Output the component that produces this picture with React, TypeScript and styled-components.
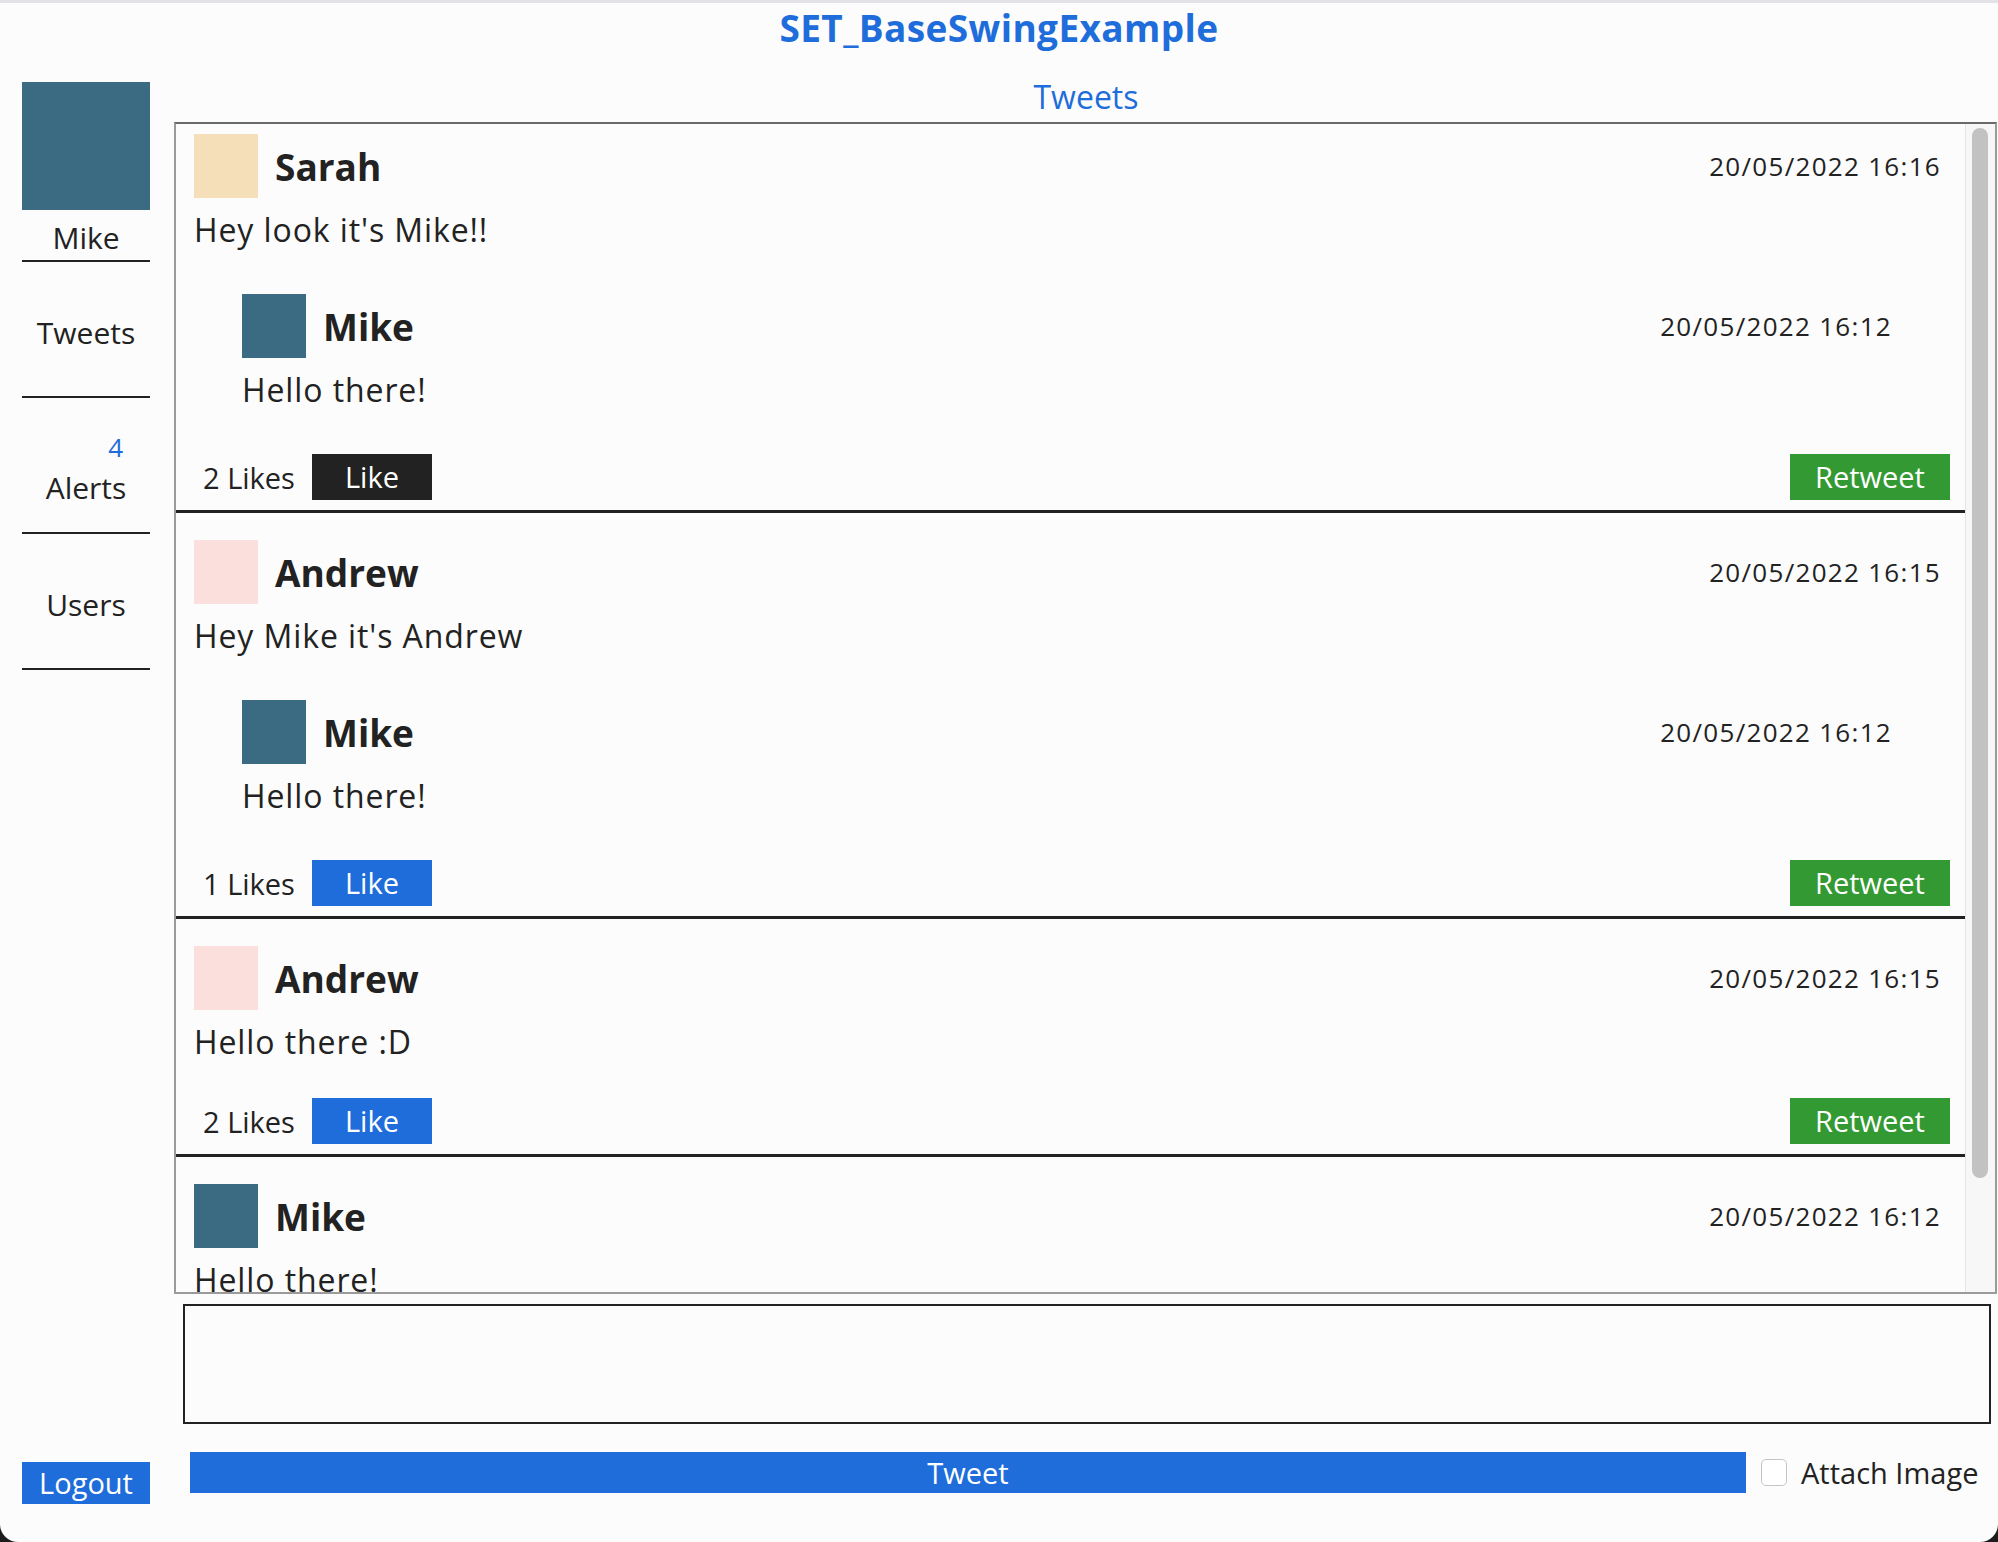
import React from 'react'
import styled, { createGlobalStyle } from 'styled-components'

const GlobalStyle = createGlobalStyle`
  html, body {
    margin: 0;
    padding: 0;
    background: #1c1c1e;
  }
  body {
    font-family: 'Open Sans', 'Noto Sans', 'DejaVu Sans', sans-serif;
    color: #222;
  }
  * {
    box-sizing: border-box;
  }
`

const BLUE = '#1e6ddb'

const Window = styled.div`
  width: 1998px;
  height: 1542px;
  background: #fcfcfc;
  border-top: 3px solid #e2e2e7;
  border-radius: 0 0 18px 18px;
  display: flex;
  flex-direction: column;
  overflow: hidden;
`

const TitleBar = styled.h1`
  margin: 0;
  padding-top: 2px;
  height: 74px;
  flex-shrink: 0;
  text-align: center;
  font-size: 37px;
  line-height: 46px;
  font-weight: 700;
  letter-spacing: 0.4px;
  color: ${BLUE};
`

const Body = styled.div`
  flex: 1;
  min-height: 0;
  display: flex;
`

/* left navigation column */
const Sidebar = styled.nav`
  width: 128px;
  margin-left: 22px;
  padding: 5px 0 38px;
  display: flex;
  flex-direction: column;
  flex-shrink: 0;
`

const ProfileAvatar = styled.div`
  width: 128px;
  height: 128px;
  background: #3a6b83;
`

const ProfileName = styled.div`
  margin-top: 10px;
  padding-bottom: 4px;
  border-bottom: 2px solid #222;
  text-align: center;
  font-size: 30px;
  line-height: 36px;
`

const NavItem = styled.div`
  height: 136px;
  padding-top: 8px;
  border-bottom: 2px solid #222;
  display: flex;
  flex-direction: column;
  align-items: center;
  justify-content: center;
  font-size: 30px;
  line-height: 36px;
  cursor: pointer;
`

const Badge = styled.span`
  align-self: flex-end;
  margin: 0 27px 8px 0;
  font-size: 26px;
  line-height: 30px;
  color: ${BLUE};
`

const LogoutButton = styled.button`
  margin-top: auto;
  width: 128px;
  height: 42px;
  padding: 0;
  border: none;
  background: ${BLUE};
  color: #fff;
  font-family: inherit;
  font-size: 29px;
  line-height: 42px;
`

/* main column */
const Content = styled.main`
  flex: 1;
  min-width: 0;
  margin-left: 24px;
  padding-bottom: 49px;
  display: flex;
  flex-direction: column;
`

const SectionTitle = styled.h2`
  margin: 0;
  height: 40px;
  text-align: center;
  font-size: 32px;
  line-height: 40px;
  font-weight: 400;
  color: ${BLUE};
`

const Feed = styled.section`
  flex: 1;
  min-height: 0;
  margin: 5px 1px 0 0;
  border: 2px solid #9b9b9b;
  border-top-color: #6a6a6a;
  display: flex;
`

const FeedList = styled.div`
  flex: 1;
  min-width: 0;
  overflow: hidden;
`

const ScrollTrack = styled.div`
  width: 30px;
  flex-shrink: 0;
  padding: 4px 7px 0 6px;
  background: #f7f7f7;
  border-left: 1px solid #e4e4e4;
`

const ScrollThumb = styled.div`
  width: 16px;
  height: 1050px;
  border-radius: 8px;
  background: #c2c2c2;
`

const TweetCard = styled.article`
  padding: 27px 24px 10px 18px;
  border-bottom: 3px solid #222;

  &:first-child {
    padding-top: 10px;
  }
`

const Quote = styled.div`
  margin: 44px 49px 0 48px;
  padding-bottom: 8px;
`

const Header = styled.div`
  display: flex;
  align-items: center;
  height: 64px;
`

const Avatar = styled.div<{ $color: string }>`
  width: 64px;
  height: 64px;
  flex-shrink: 0;
  background: ${(p) => p.$color};
`

const Name = styled.span`
  margin-left: 17px;
  font-size: 37px;
  font-weight: 700;
`

const Stamp = styled.span`
  margin-left: auto;
  font-size: 26px;
  letter-spacing: 1.3px;
`

const Message = styled.p`
  margin: 12px 0 0;
  font-size: 32px;
  line-height: 40px;
  letter-spacing: 0.9px;
  white-space: nowrap;
`

const Actions = styled.div`
  display: flex;
  align-items: center;
  height: 46px;
  margin: 36px -9px 0 9px;
`

const LikeCount = styled.span`
  font-size: 29px;
`

const ActionButton = styled.button<{ $bg: string; $w: number }>`
  width: ${(p) => p.$w}px;
  height: 46px;
  padding: 0;
  border: none;
  background: ${(p) => p.$bg};
  color: #fff;
  font-family: inherit;
  font-size: 29px;
  line-height: 46px;
`

const LikeButton = styled(ActionButton)`
  margin-left: 17px;
`

const RetweetButton = styled(ActionButton)`
  margin-left: auto;
`

/* composer */
const Composer = styled.textarea`
  height: 120px;
  margin: 10px 7px 0 9px;
  flex-shrink: 0;
  border: 2px solid #222;
  background: #fcfcfc;
  resize: none;
  outline: none;
  font-family: inherit;
  font-size: 29px;
`

const ComposerBar = styled.div`
  height: 41px;
  margin-top: 28px;
  padding-left: 16px;
  flex-shrink: 0;
  display: flex;
  align-items: center;
`

const TweetButton = styled.button`
  width: 1556px;
  height: 41px;
  flex-shrink: 0;
  padding: 0;
  border: none;
  background: ${BLUE};
  color: #fff;
  font-family: inherit;
  font-size: 29px;
  line-height: 41px;
`

const CheckLabel = styled.label`
  margin-left: 15px;
  display: flex;
  align-items: center;
  font-size: 29px;
`

const CheckBox = styled.input`
  appearance: none;
  width: 26px;
  height: 27px;
  margin: 0 14px 0 0;
  border: 1px solid #c4c4c4;
  border-radius: 5px;
  background: #fff;
`

type Post = {
  author: string
  color: string
  time: string
  text: string
}

type Tweet = Post & {
  likes: number
  liked?: boolean
  quote?: Post
}

const MIKE = '#3a6b83'
const SARAH = '#f5dfb9'
const ANDREW = '#fadfdc'

const mikeHello: Post = { author: 'Mike', color: MIKE, time: '20/05/2022 16:12', text: 'Hello there!' }

const tweets: Tweet[] = [
  { author: 'Sarah', color: SARAH, time: '20/05/2022 16:16', text: "Hey look it's Mike!!", likes: 2, liked: true, quote: mikeHello },
  { author: 'Andrew', color: ANDREW, time: '20/05/2022 16:15', text: "Hey Mike it's Andrew", likes: 1, quote: mikeHello },
  { author: 'Andrew', color: ANDREW, time: '20/05/2022 16:15', text: 'Hello there :D', likes: 2 },
  { ...mikeHello, likes: 0 },
]

const PostHead = ({ post }: { post: Post }) => (
  <>
    <Header>
      <Avatar $color={post.color} />
      <Name>{post.author}</Name>
      <Stamp>{post.time}</Stamp>
    </Header>
    <Message>{post.text}</Message>
  </>
)

const TweetItem = ({ tweet }: { tweet: Tweet }) => (
  <TweetCard>
    <PostHead post={tweet} />
    {tweet.quote && (
      <Quote>
        <PostHead post={tweet.quote} />
      </Quote>
    )}
    <Actions>
      <LikeCount>{tweet.likes} Likes</LikeCount>
      <LikeButton $bg={tweet.liked ? '#222' : BLUE} $w={120}>
        Like
      </LikeButton>
      <RetweetButton $bg='#339933' $w={160}>
        Retweet
      </RetweetButton>
    </Actions>
  </TweetCard>
)

const App = () => (
  <>
    <GlobalStyle />
    <Window>
      <TitleBar>SET_BaseSwingExample</TitleBar>
      <Body>
        <Sidebar>
          <ProfileAvatar />
          <ProfileName>Mike</ProfileName>
          <NavItem>Tweets</NavItem>
          <NavItem>
            <Badge>4</Badge>
            Alerts
          </NavItem>
          <NavItem>Users</NavItem>
          <LogoutButton>Logout</LogoutButton>
        </Sidebar>
        <Content>
          <SectionTitle>Tweets</SectionTitle>
          <Feed>
            <FeedList>
              {tweets.map((t, i) => (
                <TweetItem key={i} tweet={t} />
              ))}
            </FeedList>
            <ScrollTrack>
              <ScrollThumb />
            </ScrollTrack>
          </Feed>
          <Composer />
          <ComposerBar>
            <TweetButton>Tweet</TweetButton>
            <CheckLabel>
              <CheckBox type='checkbox' />
              Attach Image
            </CheckLabel>
          </ComposerBar>
        </Content>
      </Body>
    </Window>
  </>
)

export default App
